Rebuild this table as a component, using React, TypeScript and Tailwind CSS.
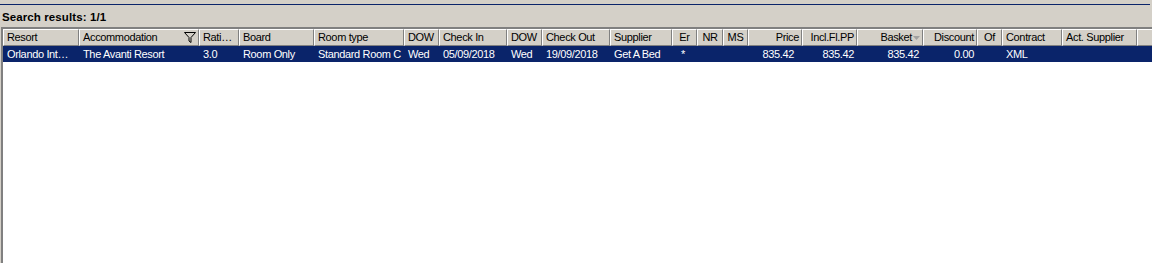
import React from 'react';

type Col = {
  label: string;
  w: number;
  align?: 'left' | 'center' | 'right';
  filter?: boolean;
  sort?: boolean;
};

const columns: Col[] = [
  { label: 'Resort', w: 76 },
  { label: 'Accommodation', w: 120, filter: true },
  { label: 'Rati…', w: 40 },
  { label: 'Board', w: 75 },
  { label: 'Room type', w: 90 },
  { label: 'DOW', w: 35 },
  { label: 'Check In', w: 68 },
  { label: 'DOW', w: 35 },
  { label: 'Check Out', w: 68 },
  { label: 'Supplier', w: 62 },
  { label: 'Er', w: 25, align: 'center' },
  { label: 'NR', w: 26, align: 'center' },
  { label: 'MS', w: 25, align: 'center' },
  { label: 'Price', w: 54, align: 'right' },
  { label: 'Incl.Fl.PP', w: 55, align: 'right' },
  { label: 'Basket', w: 66, align: 'right', sort: true },
  { label: 'Discount', w: 54, align: 'right' },
  { label: 'Of', w: 25, align: 'center' },
  { label: 'Contract', w: 60 },
  { label: 'Act. Supplier', w: 75 },
];

type Cell = { t: string; align?: 'left' | 'right'; pr?: number; pl?: number };

// one result row; cell order follows the columns above
const rows: { cells: Cell[] }[] = [
  {
    cells: [
      { t: 'Orlando Int…' },
      { t: 'The Avanti Resort' },
      { t: '3.0' },
      { t: 'Room Only' },
      { t: 'Standard Room C' },
      { t: 'Wed' },
      { t: '05/09/2018' },
      { t: 'Wed' },
      { t: '19/09/2018' },
      { t: 'Get A Bed' },
      { t: '*', pl: 9 },
      { t: '' },
      { t: '' },
      { t: '835.42', align: 'right', pr: 8 },
      { t: '835.42', align: 'right', pr: 3 },
      { t: '835.42', align: 'right', pr: 4 },
      { t: '0.00', align: 'right', pr: 3 },
      { t: '' },
      { t: 'XML' },
      { t: '' },
    ],
  },
];

function FilterIcon() {
  return (
    <svg width="12" height="11" viewBox="0 0 12 11" className="shrink-0">
      <path d="M0.5 0.5 H11.5 L7 5.5 V10.5 L5 9 V5.5 Z" fill="none" stroke="#000" strokeWidth="1" />
    </svg>
  );
}

function SortArrow() {
  return (
    <svg width="7" height="4" viewBox="0 0 7 4" className="shrink-0 ml-[1px]">
      <path d="M0 0 H7 L3.5 4 Z" fill="#a0a0a0" />
    </svg>
  );
}

export default function App() {
  return (
    <div
      className="w-[1152px] h-[263px] bg-[#d4d0c8] overflow-hidden flex flex-col text-[11px] text-black"
      style={{ fontFamily: '"Liberation Sans", Arial, sans-serif' }}
    >
      {/* top rule */}
      <div className="h-[4px] shrink-0" />
      <div className="h-px w-[1150px] bg-[#0a246a] shrink-0" />

      <div className="h-[22px] shrink-0 pl-[2px] pt-[6px] font-bold text-[11.5px] leading-[13px] tracking-[0.1px]">
        Search results: 1/1
      </div>

      {/* results grid */}
      <div className="flex-1 ml-px border-t-2 border-l-2 border-t-[#808080] border-l-[#808080] bg-white flex flex-col min-h-0">
        <div className="flex h-[17px] shrink-0 bg-[#d4d0c8] leading-[15px] tracking-[-0.35px]">
          {columns.map((c, i) => (
            <div
              key={i}
              style={{ width: c.w }}
              className={`shrink-0 flex items-center border-t border-l border-white border-r border-b border-r-[#808080] border-b-[#808080] overflow-hidden whitespace-nowrap ${
                c.align === 'right' ? 'justify-end pr-[2px] pl-[2px]' : c.align === 'center' ? 'justify-center' : 'pl-[3px] pr-[2px]'
              }`}
            >
              {c.filter ? (
                <>
                  <span className="flex-1">{c.label}</span>
                  <FilterIcon />
                </>
              ) : c.sort ? (
                <>
                  <span>{c.label}</span>
                  <SortArrow />
                </>
              ) : (
                <span>{c.label}</span>
              )}
            </div>
          ))}
          <div className="flex-1 border-t border-l border-white border-b border-b-[#808080]" />
        </div>

        {rows.map((r, ri) => (
          <div key={ri} className="flex h-[16px] shrink-0 bg-[#0a246a] text-white leading-[16px] tracking-[-0.35px]">
            {r.cells.map((cell, i) => (
              <div
                key={i}
                style={{
                  width: columns[i].w,
                  paddingRight: cell.pr ?? 2,
                  paddingLeft: cell.pl ?? 4,
                }}
                className={`shrink-0 overflow-hidden whitespace-nowrap ${cell.align === 'right' ? 'text-right' : 'text-left'}`}
              >
                {cell.t}
              </div>
            ))}
            <div className="flex-1" />
          </div>
        ))}
      </div>
    </div>
  );
}
